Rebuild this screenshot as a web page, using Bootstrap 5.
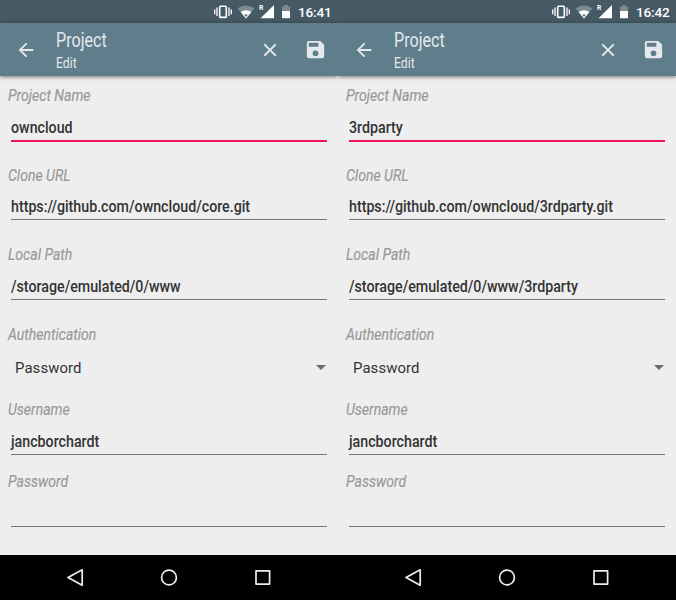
<!DOCTYPE html>
<html lang="en">
<head>
<meta charset="utf-8">
<title>Project – Edit</title>
<link href="https://cdn.jsdelivr.net/npm/bootstrap@5.3.0/dist/css/bootstrap.min.css" rel="stylesheet">
<style>
body{font-family:Roboto,"Liberation Sans",sans-serif;background:#eee;color:#333;width:676px;height:600px}
.phone{width:338px;height:600px}
.statusbar{height:23px;background:#455a64;color:#fff;padding-right:8px}
.status-icons{width:80px;margin-right:4px}
.roaming{left:44.5px;top:3px;font-size:8px;line-height:10px;font-weight:700;transform:scaleX(.85);transform-origin:0 50%}
.clock{font-size:13.6px;line-height:24px;width:32px;letter-spacing:-.2px;font-weight:500}
.appbar{height:53px;background:#607d8b;color:#e4e9eb;box-shadow:0 1px 4px rgba(0,0,0,.5);padding-left:15px;padding-right:11px}
.narrow{display:inline-block;transform:scaleX(.818);transform-origin:0 50%;white-space:nowrap}
.heading{font-size:19.3px;line-height:22px}
.heading.narrow{transform:scaleX(.835)}
.subheading{font-size:15px;line-height:18px;margin-top:2px}
.titles{padding-left:19px;padding-top:7px}
.save{margin-left:23px}
.field{height:79.6px;padding-left:8px;padding-right:11px}
.field-name{font-size:17.3px;line-height:22px;height:22px;font-style:italic;color:#999;-webkit-text-stroke:.2px #999}
.field-name .narrow{transform:scaleX(.812)}
.entry{height:34.5px;margin-left:3px;border-bottom:1px solid #777;font-size:17.4px;line-height:22px;padding-top:9.5px;font-weight:500}
.entry.active{height:36px;border-bottom:2px solid #f0135f}
.picker{font-size:14.9px;line-height:22px;margin-top:12px;padding-left:7px;padding-right:1px;letter-spacing:.1px}
.auth{height:75px}.user{height:72px}
.user .entry,.pass .entry{height:35.5px;padding-top:10.5px}
.navkeys{height:45px;background:#000}
svg{display:block;flex:none}
</style>
</head>
<body class="d-flex overflow-hidden">
<svg width="0" height="0" class="position-absolute">
<symbol id="status" viewBox="0 0 80 24">
<g fill="none" stroke="#fff" stroke-width="1.3"><rect x="5.7" y="6.2" width="6.6" height="11.2" rx=".8" stroke-width="1.6"/><path d="M3 7.5v8.5M15 7.5v8.5M.7 9.5v4.7M17.3 9.5v4.7"/></g>
<path d="M23.5 8.2Q32 2.8 40.5 8.2L32 18.5z" fill="#7c8a91"/><path d="M26.6 12Q32 8.7 37.4 12L32 18.5z" fill="#fff"/><path d="M30.3 14.4h3.4L32 17z" fill="#455a64"/>
<path d="M60 5v13.3H46.5z" fill="#fff"/>
<path d="M68 6.4h2.3V5h3.5v1.4H76V11h-8z" fill="#7c8a91"/><path d="M68 11h8v6.6q0 .7-.7.7h-6.6q-.7 0-.7-.7z" fill="#fff"/>
</symbol>
<symbol id="back" viewBox="0 0 24 24"><path fill="#e4e9eb" d="M20 11H7.83l5.59-5.59L12 4l-8 8 8 8 1.41-1.41L7.83 13H20z"/></symbol>
<symbol id="close" viewBox="0 0 24 24"><path fill="#e4e9eb" d="M19 6.41 17.59 5 12 10.59 6.41 5 5 6.41 10.59 12 5 17.59 6.41 19 12 13.41 17.59 19 19 17.59 13.41 12z"/></symbol>
<symbol id="save" viewBox="0 0 24 24"><path fill="#e4e9eb" d="M17 3H5a2 2 0 0 0-2 2v14a2 2 0 0 0 2 2h14a2 2 0 0 0 2-2V7zm-5 16a3 3 0 1 1 0-6 3 3 0 0 1 0 6zm3-10H5V5h10z"/></symbol>
<symbol id="keys" viewBox="0 0 338 45"><g fill="none" stroke="#eee" stroke-width="1.7" stroke-linejoin="round"><path d="M68 22.5 82.2 14.8v15.4z"/><circle cx="169" cy="22.5" r="7.4"/><rect x="256" y="15.9" width="13.6" height="13.2"/></g></symbol>
</svg>

<div class="phone d-flex flex-column overflow-hidden">
<div class="statusbar d-flex justify-content-end"><div class="status-icons position-relative"><svg width="80" height="24"><use href="#status"/></svg><span class="roaming position-absolute">R</span></div><span class="clock">16:41</span></div>
<header class="appbar d-flex align-items-center"><svg width="22" height="22"><use href="#back"/></svg>
<div class="titles align-self-start flex-grow-1 d-flex flex-column"><span class="narrow heading">Project</span><span class="narrow subheading">Edit</span></div>
<svg width="22" height="22"><use href="#close"/></svg><svg width="23" height="23" class="save"><use href="#save"/></svg></header>
<main class="flex-grow-1 pt-2">
<div class="field"><div class="field-name"><span class="narrow">Project Name</span></div><div class="entry active"><span class="narrow">owncloud</span></div></div>
<div class="field"><div class="field-name"><span class="narrow">Clone URL</span></div><div class="entry"><span class="narrow">https://github.com/owncloud/core.git</span></div></div>
<div class="field"><div class="field-name"><span class="narrow">Local Path</span></div><div class="entry"><span class="narrow">/storage/emulated/0/www</span></div></div>
<div class="field auth"><div class="field-name"><span class="narrow">Authentication</span></div><div class="picker d-flex justify-content-between align-items-center">Password<svg width="10" height="5"><path d="M0 0h10L5 5z" fill="#6c6c6c"/></svg></div></div>
<div class="field user"><div class="field-name"><span class="narrow">Username</span></div><div class="entry"><span class="narrow">jancborchardt</span></div></div>
<div class="field pass"><div class="field-name"><span class="narrow">Password</span></div><div class="entry"></div></div>
</main>
<footer class="navkeys"><svg width="338" height="45"><use href="#keys"/></svg></footer>
</div>

<div class="phone d-flex flex-column overflow-hidden">
<div class="statusbar d-flex justify-content-end"><div class="status-icons position-relative"><svg width="80" height="24"><use href="#status"/></svg><span class="roaming position-absolute">R</span></div><span class="clock">16:42</span></div>
<header class="appbar d-flex align-items-center"><svg width="22" height="22"><use href="#back"/></svg>
<div class="titles align-self-start flex-grow-1 d-flex flex-column"><span class="narrow heading">Project</span><span class="narrow subheading">Edit</span></div>
<svg width="22" height="22"><use href="#close"/></svg><svg width="23" height="23" class="save"><use href="#save"/></svg></header>
<main class="flex-grow-1 pt-2">
<div class="field"><div class="field-name"><span class="narrow">Project Name</span></div><div class="entry active"><span class="narrow">3rdparty</span></div></div>
<div class="field"><div class="field-name"><span class="narrow">Clone URL</span></div><div class="entry"><span class="narrow">https://github.com/owncloud/3rdparty.git</span></div></div>
<div class="field"><div class="field-name"><span class="narrow">Local Path</span></div><div class="entry"><span class="narrow">/storage/emulated/0/www/3rdparty</span></div></div>
<div class="field auth"><div class="field-name"><span class="narrow">Authentication</span></div><div class="picker d-flex justify-content-between align-items-center">Password<svg width="10" height="5"><path d="M0 0h10L5 5z" fill="#6c6c6c"/></svg></div></div>
<div class="field user"><div class="field-name"><span class="narrow">Username</span></div><div class="entry"><span class="narrow">jancborchardt</span></div></div>
<div class="field pass"><div class="field-name"><span class="narrow">Password</span></div><div class="entry"></div></div>
</main>
<footer class="navkeys"><svg width="338" height="45"><use href="#keys"/></svg></footer>
</div>
<script src="https://cdn.jsdelivr.net/npm/bootstrap@5.3.0/dist/js/bootstrap.bundle.min.js"></script>
</body>
</html>
